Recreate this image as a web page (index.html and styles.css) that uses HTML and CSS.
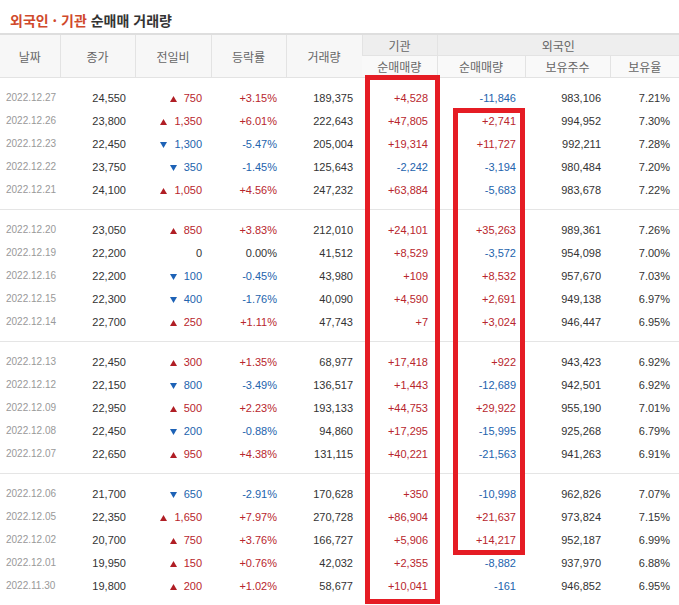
FILE: index.html
```html
<!DOCTYPE html>
<html lang="ko">
<head>
<meta charset="utf-8">
<title>외국인 · 기관 순매매 거래량</title>
<link rel="stylesheet" href="styles.css">
</head>
<body>
<div class="page">
  <h2 class="title"><span class="hl">외국인 · 기관</span> 순매매 거래량</h2>
  <table class="grid">
    <colgroup>
      <col class="c1"><col class="c2"><col class="c3"><col class="c4"><col class="c5"><col class="c6"><col class="c7"><col class="c8"><col class="c9">
    </colgroup>
    <thead>
      <tr class="h1">
        <th rowspan="2">날짜</th>
        <th rowspan="2">종가</th>
        <th rowspan="2">전일비</th>
        <th rowspan="2">등락률</th>
        <th rowspan="2">거래량</th>
        <th class="grp">기관</th>
        <th class="grp" colspan="3">외국인</th>
      </tr>
      <tr class="h2">
        <th>순매매량</th>
        <th>순매매량</th>
        <th>보유주수</th>
        <th>보유율</th>
      </tr>
    </thead>
    <tbody id="body"></tbody>
  </table>
  <div class="mark mark1"></div>
  <div class="mark mark2"></div>
</div>
<script src="app.js"></script>
</body>
</html>
```
FILE: app.js
```js
const groups = [
  [
    ["2022.12.27","24,550","u","750","+3.15%","189,375","+4,528","-11,846","983,106","7.21%"],
    ["2022.12.26","23,800","u","1,350","+6.01%","222,643","+47,805","+2,741","994,952","7.30%"],
    ["2022.12.23","22,450","d","1,300","-5.47%","205,004","+19,314","+11,727","992,211","7.28%"],
    ["2022.12.22","23,750","d","350","-1.45%","125,643","-2,242","-3,194","980,484","7.20%"],
    ["2022.12.21","24,100","u","1,050","+4.56%","247,232","+63,884","-5,683","983,678","7.22%"]
  ],
  [
    ["2022.12.20","23,050","u","850","+3.83%","212,010","+24,101","+35,263","989,361","7.26%"],
    ["2022.12.19","22,200","n","0","0.00%","41,512","+8,529","-3,572","954,098","7.00%"],
    ["2022.12.16","22,200","d","100","-0.45%","43,980","+109","+8,532","957,670","7.03%"],
    ["2022.12.15","22,300","d","400","-1.76%","40,090","+4,590","+2,691","949,138","6.97%"],
    ["2022.12.14","22,700","u","250","+1.11%","47,743","+7","+3,024","946,447","6.95%"]
  ],
  [
    ["2022.12.13","22,450","u","300","+1.35%","68,977","+17,418","+922","943,423","6.92%"],
    ["2022.12.12","22,150","d","800","-3.49%","136,517","+1,443","-12,689","942,501","6.92%"],
    ["2022.12.09","22,950","u","500","+2.23%","193,133","+44,753","+29,922","955,190","7.01%"],
    ["2022.12.08","22,450","d","200","-0.88%","94,860","+17,295","-15,995","925,268","6.79%"],
    ["2022.12.07","22,650","u","950","+4.38%","131,115","+40,221","-21,563","941,263","6.91%"]
  ],
  [
    ["2022.12.06","21,700","d","650","-2.91%","170,628","+350","-10,998","962,826","7.07%"],
    ["2022.12.05","22,350","u","1,650","+7.97%","270,728","+86,904","+21,637","973,824","7.15%"],
    ["2022.12.02","20,700","u","750","+3.76%","166,727","+5,906","+14,217","952,187","6.99%"],
    ["2022.12.01","19,950","u","150","+0.76%","42,032","+2,355","-8,882","937,970","6.88%"],
    ["2022.11.30","19,800","u","200","+1.02%","58,677","+10,041","-161","946,852","6.95%"]
  ]
];

function cls(v) {
  if (v.startsWith("+")) return "up";
  if (v.startsWith("-")) return "dn";
  return "";
}
const triUp = '<svg class="tri" width="7" height="6" viewBox="0 0 7 6"><polygon points="3.5,0 7,6 0,6"/></svg>';
const triDn = '<svg class="tri" width="7" height="6" viewBox="0 0 7 6"><polygon points="0,0 7,0 3.5,6"/></svg>';

let html = "";
groups.forEach((g, gi) => {
  html += '<tr class="sp"><td colspan="9"></td></tr>';
  g.forEach(r => {
    const dir = r[2];
    const diffCls = dir === "u" ? "up" : dir === "d" ? "dn" : "";
    const tri = dir === "u" ? triUp : dir === "d" ? triDn : "";
    html += '<tr class="row">' +
      '<td class="date">' + r[0] + '</td>' +
      '<td class="num">' + r[1] + '</td>' +
      '<td class="num ' + diffCls + '">' + tri + r[3] + '</td>' +
      '<td class="num ' + cls(r[4]) + '">' + r[4] + '</td>' +
      '<td class="num">' + r[5] + '</td>' +
      '<td class="num ' + cls(r[6]) + '">' + r[6] + '</td>' +
      '<td class="num ' + cls(r[7]) + '">' + r[7] + '</td>' +
      '<td class="num">' + r[8] + '</td>' +
      '<td class="num">' + r[9] + '</td>' +
      '</tr>';
  });
  html += '<tr class="sp' + (gi < groups.length - 1 ? ' end' : '') + '"><td colspan="9"></td></tr>';
});
document.getElementById("body").innerHTML = html;
```
FILE: styles.css
```css
html, body {
  margin: 0;
  padding: 0;
  background: #fff;
  overflow: hidden;
}
.page {
  position: relative;
  width: 679px;
  height: 605px;
  overflow: hidden;
  font-family: "Liberation Sans", Arial, sans-serif;
}
.title {
  margin: 0;
  padding: 11px 0 0 10px;
  height: 22px;
  font-family: "Noto Sans CJK KR", sans-serif;
  font-size: 14px;
  line-height: 18px;
  font-weight: bold;
  color: #333;
}
.title .hl {
  color: #d0492b;
}
.grid {
  width: 679px;
  border-collapse: collapse;
  table-layout: fixed;
}
.c1 { width: 60px; }
.c2 { width: 75px; }
.c3 { width: 76px; }
.c4 { width: 75px; }
.c5 { width: 76px; }
.c6 { width: 75px; }
.c7 { width: 88px; }
.c8 { width: 85px; }
.c9 { width: 69px; }

.grid th {
  font-family: "Noto Sans CJK KR", sans-serif;
  font-weight: normal;
  font-size: 12px;
  color: #666;
  padding: 0;
  border-left: 1px solid #e3e3e3;
  border-bottom: 1px solid #e3e3e3;
  background: #f7f7f7;
  text-align: center;
}
.grid th:first-child { border-left: none; }
.grid tr.h1 th {
  border-top: 2px solid #dedede;
  height: 20px;
}
.grid tr.h1 th.grp {
  background: #eeeeee;
}
.grid tr.h2 th {
  height: 21px;
  background: #f9f9f9;
}
.grid tr.h2 th:last-child { border-right: none; }

.grid td {
  padding: 0 9px 0 0;
  height: 23px;
  font-size: 11px;
  color: #333;
  text-align: right;
  white-space: nowrap;
}
.grid td.date {
  text-align: left;
  padding: 0 0 0 6px;
  font-size: 10px;
  color: #999;
}
.grid td.up { color: #b8262d; }
.grid td.dn { color: #2363ad; }
.tri {
  margin-right: 7px;
  vertical-align: baseline;
}
td.up .tri polygon { fill: #b01e25; }
td.dn .tri polygon { fill: #1d62b6; }

.grid tr.sp td {
  height: 8px;
  padding: 0;
}
.grid tr.sp.end td {
  border-bottom: 1px solid #e5e5e5;
}

.mark {
  position: absolute;
  box-sizing: border-box;
  border: 5px solid #e51c24;
}
.mark1 {
  left: 365px;
  top: 75px;
  width: 75px;
  height: 529px;
}
.mark2 {
  left: 453px;
  top: 108px;
  width: 72px;
  height: 447px;
}
```
